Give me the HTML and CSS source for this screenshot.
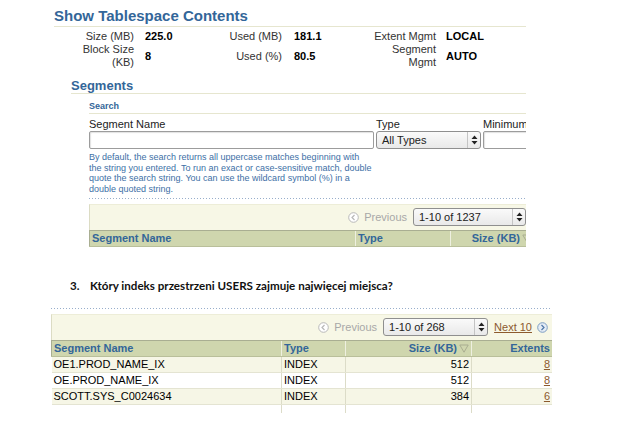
FILE: index.html
```html
<!DOCTYPE html>
<html lang="pl">
<head>
  <meta charset="UTF-8">
  <meta name="viewport" content="width=device-width, initial-scale=1.0">
  <title>Show Tablespace Contents</title>
  <link rel="stylesheet" href="styles.css">
</head>
<body>

  <!-- first screenshot: tablespace page -->
  <div class="shot shot-top">
    <h1 class="page-title">Show Tablespace Contents</h1>

    <div class="info">
      <div class="lbl">Size (MB)</div><div class="val">225.0</div>
      <div class="lbl">Used (MB)</div><div class="val">181.1</div>
      <div class="lbl">Extent Mgmt</div><div class="val">LOCAL</div>
      <div class="lbl">Block Size<br>(KB)</div><div class="val">8</div>
      <div class="lbl">Used (%)</div><div class="val">80.5</div>
      <div class="lbl">Segment<br>Mgmt</div><div class="val">AUTO</div>
    </div>

    <h2 class="sub-title">Segments</h2>

    <div class="search">
      <h3 class="search-title">Search</h3>
      <div class="fields">
        <div class="field name-field">
          <label>Segment Name</label>
          <div class="textbox"></div>
        </div>
        <div class="field type-field">
          <label>Type</label>
          <div class="select">All Types<span class="spin"><svg width="7" height="10" viewBox="0 0 7 10"><path d="M3.5 0.5L6.5 4H0.5Z M3.5 9.5L6.5 6H0.5Z" fill="#222"/></svg></span></div>
        </div>
        <div class="field min-field">
          <label>Minimum</label>
          <div class="textbox"></div>
        </div>
      </div>
      <p class="help">By default, the search returns all uppercase matches beginning with the string you entered. To run an exact or case-sensitive match, double quote the search string. You can use the wildcard symbol (%) in a double quoted string.</p>
      <div class="dots"></div>

      <div class="pager">
        <span class="nav-icon"><svg width="11" height="11" viewBox="0 0 11 11"><circle cx="5.5" cy="5.5" r="4.8" fill="#fff" stroke="#b8b8b8"/><path d="M6.5 3L4 5.5 6.5 8" fill="none" stroke="#b8b8b8" stroke-width="1.2"/></svg></span>
        <span class="prev">Previous</span>
        <div class="select range wide">1-10 of 1237<span class="spin"><svg width="7" height="10" viewBox="0 0 7 10"><path d="M3.5 0.5L6.5 4H0.5Z M3.5 9.5L6.5 6H0.5Z" fill="#222"/></svg></span></div>
      </div>
      <table class="grid grid-top">
        <tr>
          <th class="c-name">Segment Name</th>
          <th class="c-type">Type</th>
          <th class="c-size num">Size (KB)<svg class="sort" width="10" height="9" viewBox="0 0 10 9"><path d="M0.8 1H9.2L5 8.2Z" fill="none" stroke="#a9ad90"/></svg></th>
          <th class="num">Extents</th>
        </tr>
      </table>
    </div>
  </div>

  <p class="question"><span class="q-num">3.</span>Który indeks przestrzeni USERS zajmuje najwięcej miejsca?</p>

  <!-- second screenshot: result list -->
  <div class="shot shot-bottom">
    <div class="dots"></div>
    <div class="pager">
      <span class="nav-icon"><svg width="11" height="11" viewBox="0 0 11 11"><circle cx="5.5" cy="5.5" r="4.8" fill="#fff" stroke="#b8b8b8"/><path d="M6.5 3L4 5.5 6.5 8" fill="none" stroke="#b8b8b8" stroke-width="1.2"/></svg></span>
      <span class="prev">Previous</span>
      <div class="select range">1-10 of 268<span class="spin"><svg width="7" height="10" viewBox="0 0 7 10"><path d="M3.5 0.5L6.5 4H0.5Z M3.5 9.5L6.5 6H0.5Z" fill="#222"/></svg></span></div>
      <a class="next" href="#">Next 10</a>
      <span class="nav-icon"><svg width="11" height="11" viewBox="0 0 11 11"><circle cx="5.5" cy="5.5" r="4.8" fill="#e4ecf5" stroke="#7d9dc2"/><path d="M4.5 3L7 5.5 4.5 8" fill="none" stroke="#4f78a8" stroke-width="1.2"/></svg></span>
    </div>
    <table class="grid grid-bottom">
      <tr>
        <th class="b-name">Segment Name</th>
        <th class="b-type">Type</th>
        <th class="b-size num">Size (KB)<svg class="sort" width="10" height="9" viewBox="0 0 10 9"><path d="M0.8 1H9.2L5 8.2Z" fill="none" stroke="#a9ad90"/></svg></th>
        <th class="b-ext num">Extents</th>
      </tr>
      <tr class="odd">
        <td>OE1.PROD_NAME_IX</td><td>INDEX</td><td class="num">512</td><td class="num"><a href="#">8</a></td>
      </tr>
      <tr>
        <td>OE.PROD_NAME_IX</td><td>INDEX</td><td class="num">512</td><td class="num"><a href="#">8</a></td>
      </tr>
      <tr class="odd">
        <td>SCOTT.SYS_C0024634</td><td>INDEX</td><td class="num">384</td><td class="num"><a href="#">6</a></td>
      </tr>
      <tr class="cut">
        <td></td><td></td><td></td><td></td>
      </tr>
    </table>
  </div>

</body>
</html>
```

FILE: styles.css
```css
body {
  margin: 0;
  font-family: "Liberation Sans", Arial, sans-serif;
  font-size: 11px;
  color: #000;
  background: #fff;
}

/* top screenshot */
.shot-top {
  margin-left: 54px;
  width: 472px;
  overflow: hidden;
}

.page-title {
  margin: 7px 0 0;
  font-size: 15px;
  line-height: 18px;
  color: #336699;
  border-bottom: 1px solid #e6e6cf;
  padding-bottom: 1px;
}

.info {
  display: grid;
  grid-template-columns: 80px 68px 80px 72px 82px auto;
  align-items: center;
  margin-top: 3px;
  line-height: 13px;
  color: #333;
}

.info .lbl {
  text-align: right;
}

.info .val {
  font-weight: bold;
  color: #000;
}

.info .val:nth-child(2),
.info .val:nth-child(8) {
  padding-left: 11px;
}

.info .val:nth-child(4),
.info .val:nth-child(10) {
  padding-left: 12px;
}

.info .val:nth-child(6),
.info .val:nth-child(12) {
  padding-left: 10px;
}

.sub-title {
  margin: 9px 0 0 17px;
  font-size: 13px;
  line-height: 15px;
  color: #336699;
  border-bottom: 1px solid #e6e6cf;
}

.search {
  margin-left: 35px;
}

.search-title {
  margin: 6px 0 0;
  font-size: 9px;
  line-height: 13px;
  color: #336699;
  border-bottom: 1px solid #e6e6cf;
}

.fields {
  display: flex;
  gap: 2px;
  margin-top: 4px;
}

.field {
  flex-shrink: 0;
}

.field label {
  display: block;
  line-height: 13px;
  color: #222;
}

.name-field { width: 285px; }
.type-field { width: 105px; }
.min-field { width: 80px; }

.textbox {
  height: 16px;
  border: 1px solid #9c9c9c;
  border-radius: 2px;
  background: #fff;
  box-shadow: inset 1px 1px 1px rgba(0, 0, 0, 0.12);
}

.select {
  display: flex;
  align-items: center;
  height: 16px;
  padding-left: 5px;
  border: 1px solid #8f8f8f;
  border-radius: 3px;
  background: linear-gradient(#fafafa, #e9e9e9);
  font-size: 11px;
  color: #222;
}

.select .spin {
  display: flex;
  align-items: center;
  justify-content: center;
  margin-left: auto;
  width: 12px;
  height: 100%;
  border-left: 1px solid #c4c4c4;
}

.help {
  width: 284px;
  margin: 3px 0 0;
  font-size: 9px;
  line-height: 10.7px;
  color: #3d6fa6;
}

.dots {
  height: 1px;
  margin-top: 3px;
  background-image: linear-gradient(to right, #98aecb 1px, transparent 1px);
  background-size: 3px 1px;
}

.pager {
  display: flex;
  align-items: center;
  justify-content: flex-end;
  gap: 5px;
  height: 25px;
  margin-top: 5px;
  padding-right: 4px;
  background: #f7f7e6;
  border-left: 1px solid #dcdcc4;
  border-top: 1px solid #ededd8;
}

.shot-top .pager {
  padding-right: 0;
}

.nav-icon {
  display: flex;
}

.prev {
  color: #a8a8a8;
  margin-right: 1px;
}

.range {
  width: 98px;
}

.range.wide {
  width: 106px;
}

.next {
  color: #8c5a2e;
  margin-left: 1px;
}

/* tables */
.grid {
  border-collapse: collapse;
  table-layout: fixed;
}

.grid th {
  height: 15px;
  padding: 0 2px;
  background: #cfd6ae;
  color: #336699;
  font-weight: bold;
  text-align: left;
  white-space: nowrap;
  border-left: 1px solid #eef0e0;
  border-bottom: 1px solid #b9bf9a;
  border-top: 1px solid #a9ae92;
}

.grid th:first-child {
  border-left: 1px solid #a9ae92;
}

.grid .num {
  text-align: right;
}

.sort {
  margin-left: 2px;
  vertical-align: -1px;
}

.grid-top {
  width: 520px;
}

.grid-top .c-name { width: 261px; }
.grid-top .c-type { width: 90px; }
.grid-top .c-size { width: 79px; }

.question {
  margin: 31px 0 0 70px;
  font-family: Lato, "Open Sans", sans-serif;
  font-weight: bold;
  font-size: 11.6px;
  line-height: 16px;
  color: #111;
}

.q-num {
  display: inline-block;
  width: 20px;
}

.shot-bottom {
  width: 501px;
  margin: 14px 0 0 51px;
}

.shot-bottom .dots {
  margin-top: 0;
}

.grid-bottom {
  width: 501px;
}

.grid-bottom .b-name { width: 225px; }
.grid-bottom .b-type { width: 59px; }
.grid-bottom .b-size { width: 121px; }

.grid td {
  height: 15px;
  padding: 0 2px;
  line-height: 15px;
  white-space: nowrap;
  border-left: 1px solid #dcdcc8;
  border-bottom: 1px solid #e4e4d2;
}

.grid td:first-child {
  border-left: none;
}

.grid tr.odd td {
  background: #f6f6e6;
}

.grid tr.cut td {
  height: 8px;
  border-bottom: none;
}

.grid td a {
  color: #8c5a2e;
}
```
